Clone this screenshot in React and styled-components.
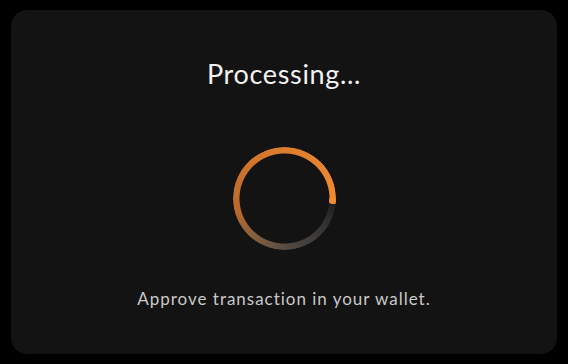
import styled, { createGlobalStyle } from "styled-components"

const GlobalStyle = createGlobalStyle`
    html, body {
        margin: 0;
        background: #000000;
    }
    body {
        font-family: "Lato", "Open Sans", sans-serif;
    }
`

export default function App() {
    return (
        <Page>
            <GlobalStyle />
            <Card>
                <Title>Processing...</Title>
                <Spinner>
                    <Ring />
                    <Head />
                </Spinner>
                <Hint>Approve transaction in your wallet.</Hint>
            </Card>
        </Page>
    )
}

const Page = styled.div`
    width: 568px;
    height: 364px;
    padding: 10px 11px;
    box-sizing: border-box;
`
const Card = styled.div`
    height: 344px;
    background-color: #131313;
    border-radius: 16px;
    display: flex;
    flex-direction: column;
    align-items: center;
    box-sizing: border-box;
    padding-top: 48px;
`
const Title = styled.h1`
    margin: 0;
    font-size: 27px;
    font-weight: 400;
    color: #f2f2f2;
    line-height: 32px;
    letter-spacing: 0.65px;
`
const Spinner = styled.div`
    position: relative;
    width: 103px;
    height: 103px;
    margin-top: 57px;
`
const Ring = styled.div`
    width: 100%;
    height: 100%;
    border-radius: 50%;
    background: conic-gradient(from 96deg,
        #202020 0deg,
        #353535 30deg,
        #4e4640 75deg,
        #7c5c40 115deg,
        #b8692c 160deg,
        #d5772c 230deg,
        #f28b30 360deg);
    -webkit-mask: radial-gradient(circle, transparent 44.5px, #000 45.5px);
    mask: radial-gradient(circle, transparent 44.5px, #000 45.5px);
`
const Head = styled.div`
    position: absolute;
    width: 7px;
    height: 7px;
    border-radius: 50%;
    background: #f28b30;
    right: 0px;
    top: 50px;
`
const Hint = styled.p`
    margin: 38px 0 0;
    font-size: 17px;
    color: #c9c9c9;
    letter-spacing: 0.98px;
`
